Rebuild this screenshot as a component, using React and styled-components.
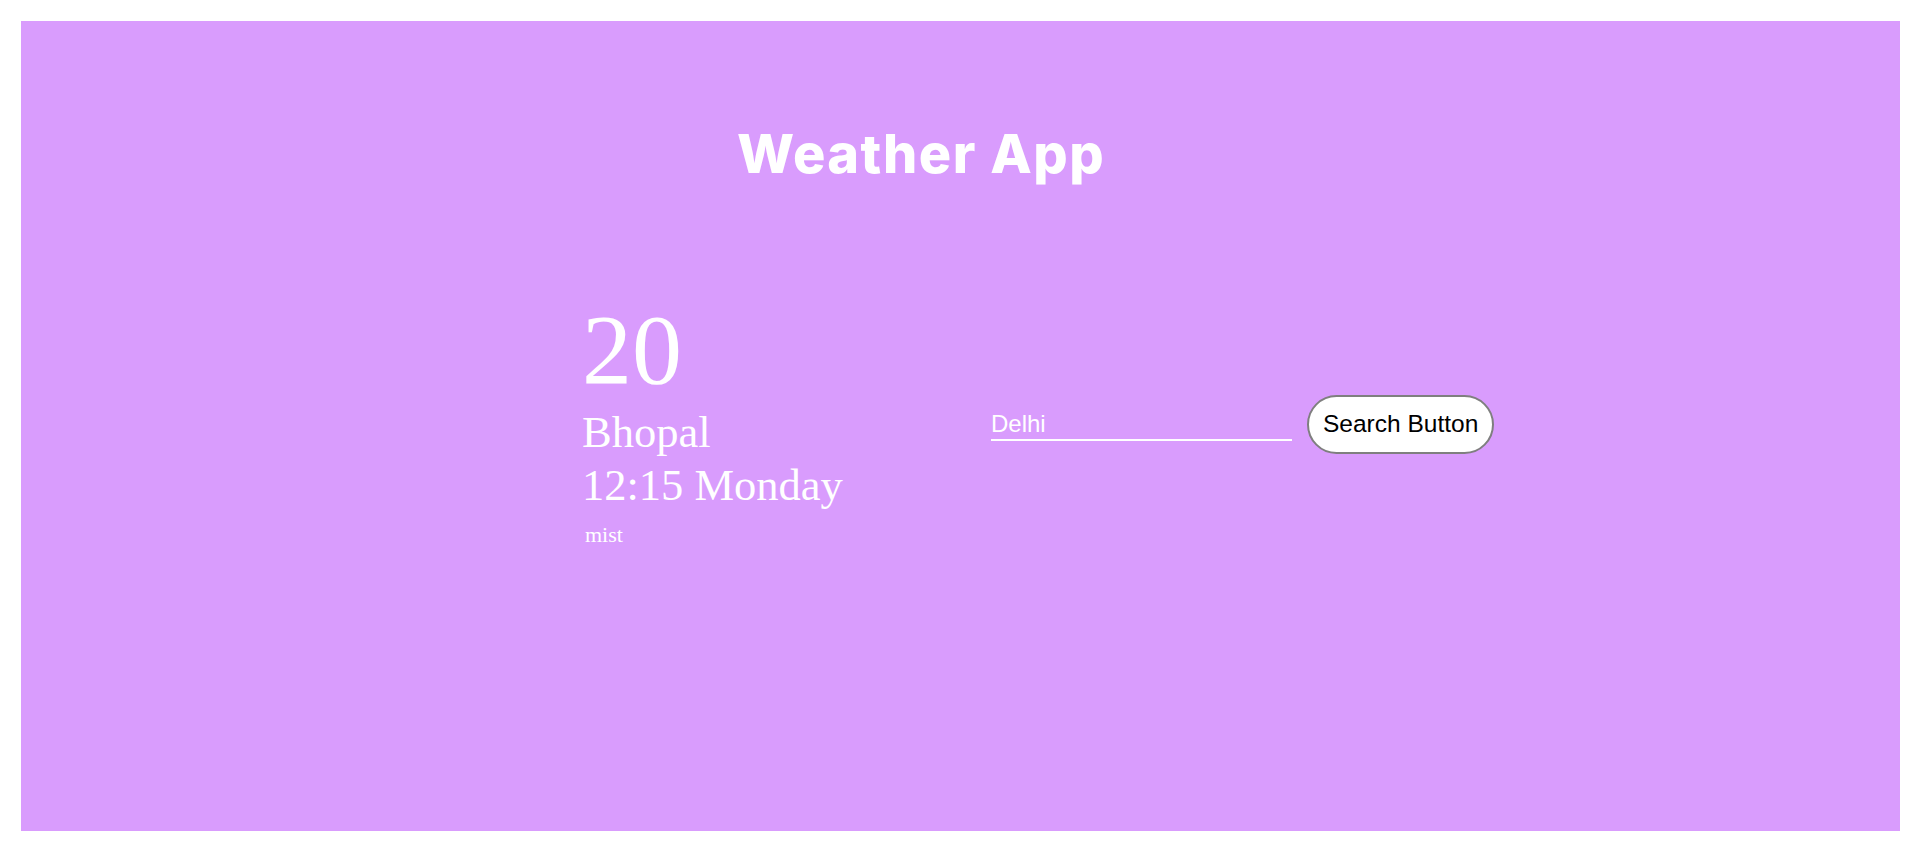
import React from 'react'
import styled, { createGlobalStyle } from 'styled-components'

const GlobalStyle = createGlobalStyle`
  body {
    margin: 0;
    background: #ffffff;
    font-family: "Liberation Serif", "Times New Roman", serif;
  }
`

const Page = styled.div`
  padding: 21px;
`

const Card = styled.main`
  background: #d99cfd;
  height: 810px;
  padding-top: 101px;
  box-sizing: border-box;
`

const Title = styled.h1`
  width: 1800px;
  margin: 0;
  text-align: center;
  font-family: Inter, "Open Sans", sans-serif;
  font-weight: 800;
  font-size: 54px;
  line-height: 64px;
  letter-spacing: 1.5px;
  color: #ffffff;
`

const Row = styled.section`
  display: flex;
  align-items: center;
  margin-top: 113px;
  padding-left: 561px;
`

const Info = styled.div`
  width: 409px;
  display: flex;
  flex-direction: column;
  color: #ffffff;
`

const Temp = styled.div`
  font-size: 100px;
  line-height: 101px;
`

const Line = styled.div`
  font-size: 44.5px;
  line-height: 53px;
  margin-top: ${(p) => p.$gap || 0}px;
`

const Condition = styled.div`
  font-size: 22px;
  line-height: 26px;
  margin-top: 10px;
  padding-left: 3px;
`

const SearchInput = styled.input`
  width: 301px;
  height: 30px;
  margin: 2px 0 0 0;
  padding: 0;
  box-sizing: content-box;
  border: none;
  border-bottom: 2px solid #ffffff;
  background: transparent;
  color: #ffffff;
  font-family: "Liberation Sans", Arial, sans-serif;
  font-size: 24px;
  outline: none;
`

const SearchButton = styled.button`
  margin: 1px 0 0 15px;
  height: 59px;
  padding: 0 14px;
  border: 2px solid #7f7f7f;
  border-radius: 30px;
  background: #ffffff;
  color: #000000;
  font-family: "Liberation Sans", Arial, sans-serif;
  font-size: 24.5px;
  cursor: pointer;
`

export default function App() {
  return (
    <>
      <GlobalStyle />
      <Page>
        <Card>
          <Title>Weather App</Title>
          <Row>
            <Info>
              <Temp>20</Temp>
              <Line $gap={6}>Bhopal</Line>
              <Line>12:15 Monday</Line>
              <Condition>mist</Condition>
            </Info>
            <SearchInput type="text" defaultValue="Delhi" />
            <SearchButton>Search Button</SearchButton>
          </Row>
        </Card>
      </Page>
    </>
  )
}
